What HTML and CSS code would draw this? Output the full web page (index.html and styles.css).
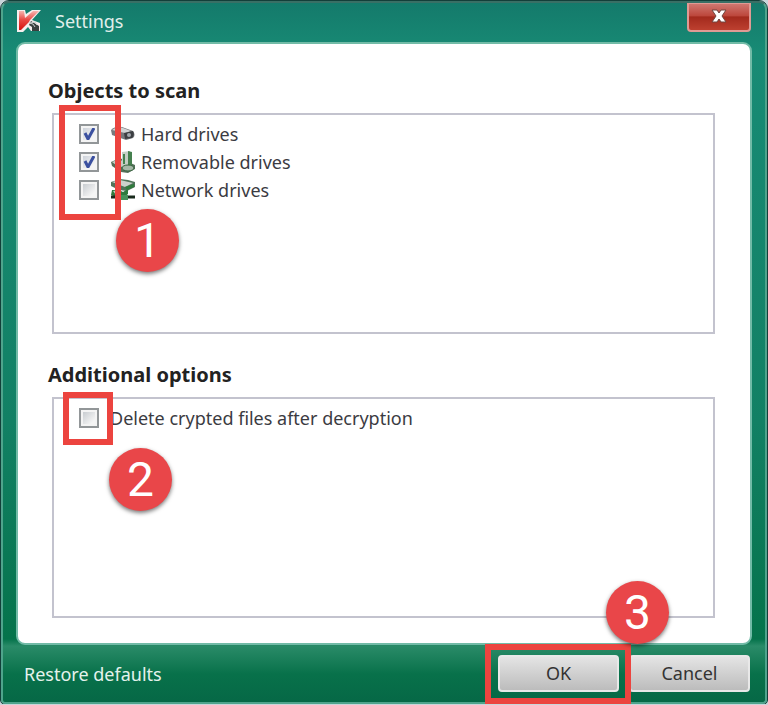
FILE: index.html
```
<!DOCTYPE html>
<html lang="en">
<head>
<meta charset="utf-8">
<title>Settings</title>
<link rel="stylesheet" href="styles.css">
</head>
<body>
<main class="window">
  <header class="titlebar">
    <svg class="logo" viewBox="0 0 24 24" aria-hidden="true">
      <defs><linearGradient id="red" x1="0" y1="0" x2="0" y2="1"><stop offset="0" stop-color="#f7b5b0"/><stop offset=".45" stop-color="#ea4a45"/><stop offset="1" stop-color="#d6120f"/></linearGradient></defs>
      <path d="M0 1h8l1 4 6-4h9l-9 10 8 3v8h-9l-3-4-5 5H0z" fill="#f6eeee"/>
      <path d="M2 2h5l1 7 8-7h6l-9 9-1 2-8 8H2z" fill="url(#red)"/>
      <path d="m14 12 8 5v5h-7v-4l-3-2z" fill="#39403f"/>
      <path d="m12 14 4 1 2 3m-5-4 5-1 2 3" fill="none" stroke="#c7cdcb"/>
    </svg>
    <h1 class="title">Settings</h1>
    <button class="close" type="button" aria-label="Close">
      <svg viewBox="0 0 16 14" aria-hidden="true"><path d="M1 1h5l2 3 2-3h5l-4 6 4 6h-5l-2-3-2 3H1l4-6z" fill="#fff" stroke="#70453f"/></svg>
    </button>
  </header>

  <section class="panel">
    <section class="group">
      <h2 class="heading">Objects to scan</h2>
      <div class="box">
        <label class="row"><input class="check" type="checkbox" checked>
          <svg class="icon" viewBox="0 0 26 24" aria-hidden="true">
            <path d="M1 8q4-4 11-3l11 4q3 4 0 7l-7 2-14-5z" fill="#77797c"/><path d="M2 8q5-4 11-2l8 3-6 2z" fill="#d2d4d5"/><path d="m14 11 9-2q2 4-1 7l-7 1z" fill="#3c3e42"/><circle cx="19" cy="13" r="2" fill="#a3a8ae"/>
          </svg><span>Hard drives</span></label>
        <label class="row"><input class="check" type="checkbox" checked>
          <svg class="icon" viewBox="0 0 26 24" aria-hidden="true">
            <path d="m1 12 9-4 6 3 9 4v4l-7 4-7-1-9-6z" fill="#54705a"/><path d="m2 12 8-3 5 5-5 4zM12 2l8-1v14l-8 2z" fill="#c4cec5"/><path d="m18 1 4 1v13l-4 1zM13 4h2v10h-2z" fill="#45804e"/><ellipse cx="18" cy="18" rx="6" ry="3" fill="#a5b8a7" stroke="#38643f"/>
          </svg><span>Removable drives</span></label>
        <label class="row"><input class="check" type="checkbox">
          <svg class="icon" viewBox="0 0 26 24" aria-hidden="true">
            <path d="m1 4 9-3 8 1 7 2v5l-8 4-8-1-8-4z" fill="#50745a"/><path d="m2 4 8-2 13 3-8 4z" fill="#cbd2cc"/><path d="m15 9 9-3v3l-7 3z" fill="#2f7c3c"/><path d="M2 12h7l4 2 5-3v5l-5 4H8l-7-3z" fill="#307a3e"/><path d="m3 13 7-1 1 3-5 2z" fill="#bcd0be"/><path d="M1 19h8m9 0h7" stroke="#182a1c" stroke-width="3"/><path d="M9 17h9v5H9z" fill="#47925a"/>
          </svg><span>Network drives</span></label>
      </div>
      <span class="frame frame-scan"></span>
      <span class="badge badge-scan">1</span>
    </section>

    <section class="group">
      <h2 class="heading">Additional options</h2>
      <div class="box">
        <label class="row"><input class="check" type="checkbox"><span>Delete crypted files after decryption</span></label>
      </div>
      <span class="frame frame-option"></span>
      <span class="badge badge-option">2</span>
    </section>
  </section>

  <footer class="footer">
    <a class="restore" href="#">Restore defaults</a>
    <div class="actions">
      <button class="button" type="button">OK</button>
      <button class="button" type="button">Cancel</button>
      <span class="frame frame-ok"></span>
      <span class="badge badge-ok">3</span>
    </div>
  </footer>
</main>
</body>
</html>
```
FILE: styles.css
```
* { box-sizing: border-box; }

body {
  margin: 0;
  padding: 1px 1px 0;
  background: #c9d6da;
  color: #3b3b42;
  font: 18px/28px "Noto Sans", sans-serif;
}

h1, h2 { margin: 0; }

.window {
  display: flex;
  flex-direction: column;
  min-height: 703px;
  padding: 0 13px;
  border: 2px solid #4fa48c;
  border-top-color: #396f65;
  border-radius: 8px 8px 4px 4px;
  outline: 1px solid #123f39;
  background: linear-gradient(#147a6b 0, #188b75 50px, #128064 60%, #05734b 91%, #2a8b68 92%, #08714a 96%, #066846 100%);
}

.titlebar {
  display: flex;
  align-items: flex-start;
  height: 39px;
}

.logo { width: 24px; height: 24px; margin: 6px 0 0 1px; }

.title {
  margin: 4px auto 0 14px;
  color: #e1efeb;
  font-size: 18px;
  font-weight: 400;
}

.close {
  display: flex;
  align-items: center;
  justify-content: center;
  width: 64px;
  height: 29px;
  margin-right: 1px;
  padding: 0 0 2px;
  border: 2px solid #e09a94;
  border-top-width: 1px;
  border-radius: 0 0 4px 4px;
  background: linear-gradient(#cf7770, #bd473c 45%, #a32a1d 50%, #bd4030);
}

.close svg { width: 16px; height: 14px; }

.panel {
  display: flex;
  flex: 1;
  flex-direction: column;
  gap: 27px;
  padding: 33px 35px 24px 30px;
  border: 2px solid #72bba7;
  border-radius: 9px;
  background: #fff;
}

.group {
  position: relative;
  display: flex;
  flex-direction: column;
}

.heading {
  margin-bottom: 8px;
  color: #222;
  font-size: 20px;
  font-weight: 700;
  line-height: 28px;
}

.box {
  min-height: 221px;
  margin-left: 4px;
  padding: 5px 0 0 25px;
  border: 2px solid #c3c3ce;
}

.row {
  display: flex;
  align-items: center;
  height: 28px;
}

.check {
  appearance: none;
  width: 20px;
  height: 20px;
  margin: 0 11px 0 0;
  border: 2px solid #929698;
  outline: 2px solid #f4f4f4;
  outline-offset: -4px;
  background: linear-gradient(135deg, #bfc4c9, #f5f5f5 75%);
}

.check:checked {
  background: url("data:image/svg+xml,%3Csvg xmlns='http://www.w3.org/2000/svg' viewBox='0 0 16 16'%3E%3Cpath d='M4 7l3 6L13 2' fill='none' stroke='%233b50a0' stroke-width='3'/%3E%3C/svg%3E") center / 16px 16px, linear-gradient(135deg, #c5cbd5, #f5f5f5 75%);
}

.icon { width: 26px; height: 24px; margin-right: 5px; }

.frame {
  position: absolute;
  border: 6px solid #ec443f;
  pointer-events: none;
}

.frame-scan { top: 28px; left: 11px; width: 62px; height: 115px; }
.frame-option { top: 31px; left: 15px; width: 50px; height: 53px; }
.frame-ok { top: -11px; left: -13px; width: 146px; height: 60px; }

.badge {
  position: absolute;
  width: 63px;
  height: 63px;
  border-radius: 50%;
  background: #e94649;
  box-shadow: 0 2px 4px #0008;
  color: #fff;
  font: 48px/63px Roboto, "Liberation Sans", sans-serif;
  text-align: center;
}

.badge-scan { top: 132px; left: 68px; }
.badge-option { top: 87px; left: 61px; }
.badge-ok { top: -74px; left: 108px; }

.footer {
  display: flex;
  align-items: center;
  justify-content: space-between;
  height: 57px;
  padding: 0 2px 0 8px;
}

.restore { color: #e4f2ec; text-decoration: none; }

.actions { position: relative; display: flex; gap: 10px; }

.button {
  width: 121px;
  height: 37px;
  padding: 0 0 2px;
  border: 2px solid #e8e8e8;
  border-radius: 4px;
  background: linear-gradient(#e4e4e4, #bcbcbc);
  color: #333;
  font: inherit;
}
```
